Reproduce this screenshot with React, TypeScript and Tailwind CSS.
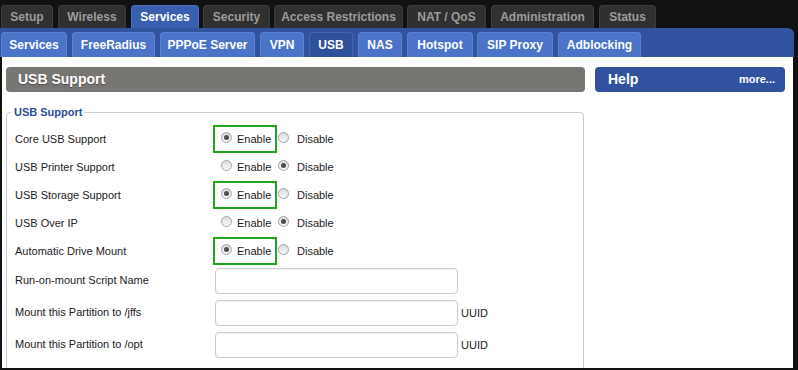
import React from "react";

const topTabs = [
  { label: "Setup", className: "ml-[1px] w-[52px]" },
  { label: "Wireless", className: "ml-[5px] w-[68px]" },
  { label: "Services", className: "ml-[5px] w-[68px]", active: true },
  { label: "Security", className: "ml-[4px] w-[67px]" },
  { label: "Access Restrictions", className: "ml-[4px] w-[129px]" },
  { label: "NAT / QoS", className: "ml-[4px] w-[79px]" },
  { label: "Administration", className: "ml-[5px] w-[103px]" },
  { label: "Status", className: "ml-[5px] w-[57px]" },
];

const subTabs = [
  { label: "Services", className: "ml-[1px] w-[66px]" },
  { label: "FreeRadius", className: "ml-[5px] w-[83px]" },
  { label: "PPPoE Server", className: "ml-[5px] w-[95px]" },
  { label: "VPN", className: "ml-[5px] w-[44px]" },
  { label: "USB", className: "ml-[5px] w-[44px]", active: true },
  { label: "NAS", className: "ml-[5px] w-[44px]" },
  { label: "Hotspot", className: "ml-[5px] w-[66px]" },
  { label: "SIP Proxy", className: "ml-[4px] w-[76px]" },
  { label: "Adblocking", className: "ml-[5px] w-[83px]" },
];

const radioRows = [
  { label: "Core USB Support", on: true, highlight: true },
  { label: "USB Printer Support", on: false },
  { label: "USB Storage Support", on: true, highlight: true },
  { label: "USB Over IP", on: false },
  { label: "Automatic Drive Mount", on: true, highlight: true },
];

const inputRows = [
  { label: "Run-on-mount Script Name" },
  { label: "Mount this Partition to /jffs", suffix: "UUID" },
  { label: "Mount this Partition to /opt", suffix: "UUID" },
];

function Radio({ checked }: { checked: boolean }) {
  return (
    <span className="mb-[4px] flex h-[11px] w-[11px] shrink-0 items-center justify-center rounded-full border border-[#a3a3a3] bg-linear-to-b from-[#d9d9d9] to-[#fbfbfb]">
      {checked ? <span className="h-[5px] w-[5px] rounded-full bg-[#4d4d4d]" /> : null}
    </span>
  );
}

function RadioRow({
  label,
  on,
  highlight,
  bare,
}: {
  label: string;
  on: boolean;
  highlight?: boolean;
  bare?: boolean;
}) {
  // bare: row that runs past the bottom edge, only the radio tops show
  return (
    <div className="flex h-[28px] items-center">
      <div className="w-[198px] shrink-0">{label}</div>
      <span
        className={
          highlight
            ? "flex h-[28px] w-[64px] items-center border-2 border-[#22a622] pl-[6px]"
            : "flex h-[28px] w-[64px] items-center border-2 border-transparent pl-[6px]"
        }
      >
        <Radio checked={on} />
        {bare ? null : <span className="ml-[5px]">Enable</span>}
      </span>
      <span className="ml-[1px] flex items-center">
        <Radio checked={!on} />
        {bare ? null : <span className="ml-[8px]">Disable</span>}
      </span>
    </div>
  );
}

function InputRow({ label, suffix }: { label: string; suffix?: string }) {
  return (
    <div className="flex h-[32px] items-center">
      <div className="mb-[2px] w-[198px] shrink-0">{label}</div>
      <input
        type="text"
        className="ml-[2px] h-[26px] w-[243px] rounded-[4px] border border-[#cccccc] bg-white shadow-[inset_0_1px_2px_rgba(0,0,0,0.06)] outline-none"
      />
      {suffix ? <span className="ml-[3px]">{suffix}</span> : null}
    </div>
  );
}

export default function App() {
  return (
    <div className="flex h-[370px] w-[798px] flex-col overflow-hidden bg-[#111111] font-['Liberation_Sans',Arial,sans-serif]">
      <nav className="flex h-[28px] shrink-0 items-end">
        {topTabs.map((tab) => (
          <div
            key={tab.label}
            className={
              tab.active
                ? `${tab.className} flex h-[23px] items-center justify-center rounded-t-[4px] border border-b-0 border-[#4a6fc0] bg-[#3a5fb1] text-[12px] font-bold text-white`
                : `${tab.className} flex h-[23px] items-center justify-center rounded-t-[4px] border border-b-0 border-[#3c3c3c] bg-[#303030] text-[12px] font-bold text-[#9c9c9c]`
            }
          >
            {tab.label}
          </div>
        ))}
      </nav>

      <nav className="mr-[4px] flex h-[29px] shrink-0 items-end rounded-tr-[6px] bg-[#3254a0]">
        {subTabs.map((tab) => (
          <div
            key={tab.label}
            className={
              tab.active
                ? `${tab.className} flex h-[25px] items-center justify-center rounded-t-[4px] border border-b-0 border-[#4466b0] bg-[#2f519c] text-[12px] font-bold text-white`
                : `${tab.className} flex h-[25px] items-center justify-center rounded-t-[4px] border border-b-0 border-[#5a82d2] bg-[#4b74c8] text-[12px] font-bold text-white`
            }
          >
            {tab.label}
          </div>
        ))}
      </nav>

      <main className="mb-[2px] ml-[2px] mr-[5px] flex min-h-0 flex-1 overflow-hidden bg-white pl-[4px] pt-[10px]">
        <div className="w-[579px] shrink-0">
          <div className="flex h-[25px] w-[579px] items-center rounded-[4px] bg-[#787672] pl-[12px] text-[14px] font-bold text-white [text-shadow:0_1px_1px_rgba(0,0,0,0.35)]">
            USB Support
          </div>

          <fieldset className="mt-[13px] w-[578px] rounded-[4px] border border-[#cccccc] pl-[4px] text-[11px] text-[#222222]">
            <legend className="px-[3px] text-[11px] leading-[14px] font-bold text-[#2c4d9c]">USB Support</legend>
            <div className="pl-[4px] pt-[6px]">
              {radioRows.map((row) => (
                <RadioRow key={row.label} label={row.label} on={row.on} highlight={row.highlight} />
              ))}
              {inputRows.map((row) => (
                <InputRow key={row.label} label={row.label} suffix={row.suffix} />
              ))}
              <RadioRow label="" on={false} bare />
            </div>
          </fieldset>
        </div>

        <aside className="ml-[10px] w-[190px] shrink-0">
          <div className="flex h-[25px] items-center justify-between rounded-[4px] bg-[#31539f] pl-[13px] pr-[10px] text-white">
            <span className="text-[14px] font-bold">Help</span>
            <span className="text-[11px] font-bold">more...</span>
          </div>
        </aside>
      </main>
    </div>
  );
}
